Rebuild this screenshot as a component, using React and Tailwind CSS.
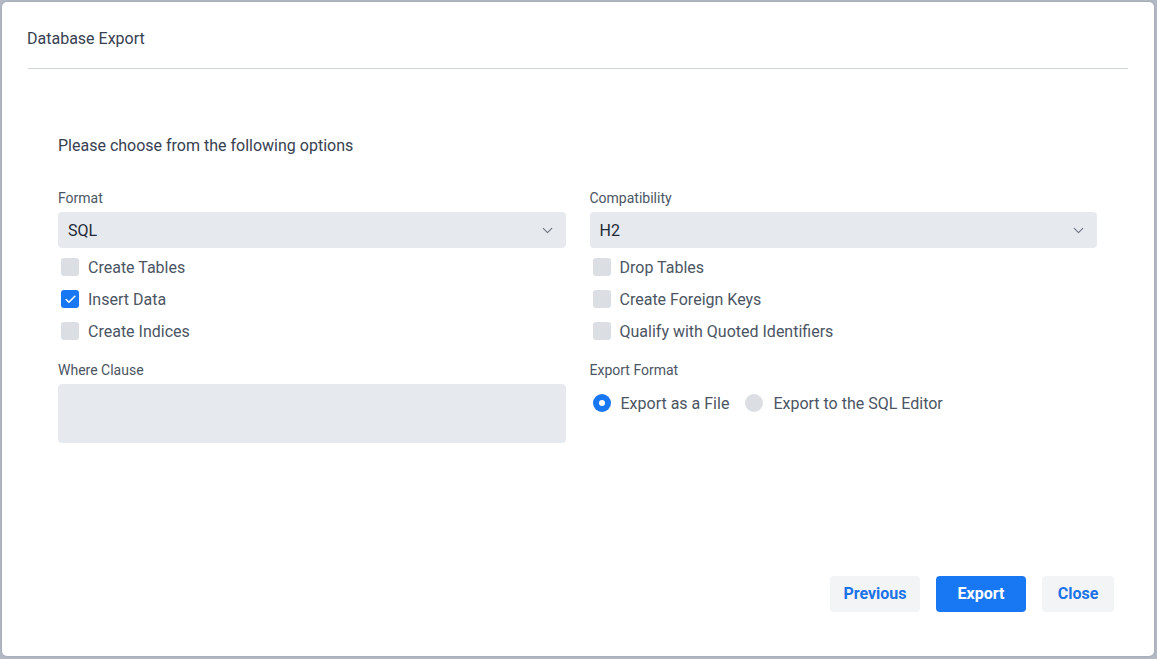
import React, { useState } from 'react';
import { ChevronDown, Check } from 'lucide-react';

const leftChecks = [
    { label: 'Create Tables', checked: false },
    { label: 'Insert Data', checked: true },
    { label: 'Create Indices', checked: false },
];

const rightChecks = [
    { label: 'Drop Tables', checked: false },
    { label: 'Create Foreign Keys', checked: false },
    { label: 'Qualify with Quoted Identifiers', checked: false },
];

const CheckRow = ({ label, checked }) => (
    <div className="h-8 flex items-center">
        <div className={`w-[18px] h-[18px] ml-[3px] rounded-[3px] flex items-center justify-center ${checked ? 'bg-[#1877f2]' : 'bg-[#dbdee3]'}`}>
            {checked && <Check size={13} strokeWidth={3} className="text-white" />}
        </div>
        <span className="ml-[9px] text-[16px] leading-6 pt-[1px] text-[#4b5563]">{label}</span>
    </div>
);

const Select = ({ value }) => (
    <div className="h-9 rounded-[4px] bg-[#e6e9ee] flex items-center justify-between pl-[10px] pr-[10px]">
        <span className="text-[16px] leading-6 pt-[1px] text-[#1f2937]">{value}</span>
        <ChevronDown size={17} strokeWidth={1.5} className="text-[#6b7280]" />
    </div>
);

const Label = ({ children }) => (
    <div className="text-[14px] leading-[18px] text-[#4b5563] mb-[5px]">{children}</div>
);

const App = () => {
    const [mode] = useState('file');

    return (
        <div className="w-full h-screen bg-[#b3bac5] pl-[2px] pt-[2px] pr-[3px] pb-[3px] font-['Roboto',sans-serif]">
            <div className="w-full h-full bg-white rounded-[5px] shadow-[0_0_3px_rgba(0,0,0,0.15)] flex flex-col">
                <div className="mx-[26px] pt-[25px] pb-[17px] border-b border-[#d1d5db]">
                    <h1 className="text-[16px] leading-6 text-[#374151] -ml-[1px]">Database Export</h1>
                </div>

                <div className="pl-[56px] pr-[57px] pt-[65px]">
                    <p className="text-[16px] leading-6 text-[#374151]">Please choose from the following options</p>

                    <div className="grid grid-cols-2 gap-x-6 mt-[31px]">
                        <div>
                            <Label>Format</Label>
                            <Select value="SQL" />
                            <div className="mt-[3px]">
                                {leftChecks.map((c) => (
                                    <CheckRow key={c.label} {...c} />
                                ))}
                            </div>
                            <div className="mt-[14px]">
                                <Label>Where Clause</Label>
                                <div className="h-[59px] mt-[1px] rounded-[4px] bg-[#e6e9ee]"></div>
                            </div>
                        </div>

                        <div>
                            <Label>Compatibility</Label>
                            <Select value="H2" />
                            <div className="mt-[3px]">
                                {rightChecks.map((c) => (
                                    <CheckRow key={c.label} {...c} />
                                ))}
                            </div>
                            <div className="mt-[14px]">
                                <Label>Export Format</Label>
                                <div className="h-[38px] flex items-center">
                                    <div className="ml-[3px] w-[18px] h-[18px] rounded-full bg-[#1877f2] flex items-center justify-center">
                                        <div className="w-[6px] h-[6px] rounded-full bg-white"></div>
                                    </div>
                                    <span className="ml-[10px] text-[16px] leading-6 pt-[1px] text-[#4b5563]">Export as a File</span>
                                    <div className={`ml-[16px] w-[18px] h-[18px] rounded-full ${mode === 'editor' ? 'bg-[#1877f2]' : 'bg-[#dbdee3]'}`}></div>
                                    <span className="ml-[10px] text-[16px] leading-6 pt-[1px] text-[#4b5563]">Export to the SQL Editor</span>
                                </div>
                            </div>
                        </div>
                    </div>
                </div>

                <div className="flex-1"></div>

                <div className="flex justify-end gap-4 pr-[40px] pb-[44px]">
                    <button className="h-9 w-[90px] rounded-[4px] bg-[#f3f4f6] text-[16px] font-bold text-[#1a73e8]">Previous</button>
                    <button className="h-9 w-[90px] rounded-[4px] bg-[#1877f2] text-[16px] font-bold text-white">Export</button>
                    <button className="h-9 w-[72px] rounded-[4px] bg-[#f3f4f6] text-[16px] font-bold text-[#1a73e8]">Close</button>
                </div>
            </div>
        </div>
    );
};

export default App;
